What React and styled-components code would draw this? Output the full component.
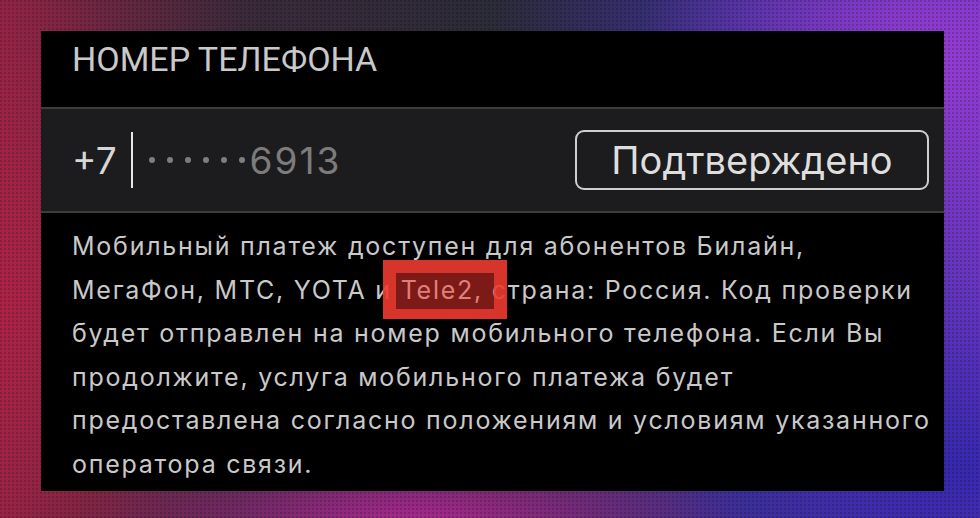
import styled, { createGlobalStyle } from "styled-components";

const GlobalStyle = createGlobalStyle`
  html, body {
    margin: 0;
    padding: 0;
  }
  body {
    font-family: Inter, "Noto Sans", sans-serif;
  }
`;

// Page backdrop

const Root = styled.div`
  position: relative;
  width: 980px;
  height: 518px;
  overflow: hidden;
  box-sizing: border-box;
  padding: 31px 0 0 41px;
  background:
    radial-gradient(circle at 1px 1px, rgba(0, 0, 0, 0.18) 1px, transparent 1.4px) 0 0 / 4px 4px,
    radial-gradient(ellipse 420px 300px at 930px 60px, rgba(150, 60, 210, 0.95), transparent 70%),
    radial-gradient(ellipse 380px 260px at 950px 470px, rgba(50, 40, 170, 0.95), transparent 75%),
    radial-gradient(ellipse 460px 160px at 420px 530px, rgba(190, 40, 160, 0.9), transparent 75%),
    radial-gradient(ellipse 260px 420px at 0px 300px, rgba(170, 35, 70, 1), transparent 80%),
    linear-gradient(90deg, #8e2446 0%, #3a2a3a 25%, #2c2b38 50%, #3b3090 75%, #6a36c0 100%);
`;

const Panel = styled.div`
  width: 903px;
  height: 460px;
  background: #000;
  display: flex;
  flex-direction: column;
`;

const Header = styled.div`
  height: 76px;
  box-sizing: border-box;
  padding: 7px 0 0 31px;
  color: #c9c9c9;
  font-family: Roboto, "Liberation Sans", sans-serif;
  font-size: 34px;
  line-height: 42px;
`;

const Divider = styled.div`
  height: 2px;
  background: #3c3c3e;
`;

// Phone input row

const InputRow = styled.div`
  height: 102px;
  box-sizing: border-box;
  padding: 0 15px 0 31px;
  background: #1c1c1e;
  display: flex;
  align-items: center;
`;

const Prefix = styled.span`
  color: #d6d6d6;
  font-size: 37px;
  line-height: 1;
`;

const Caret = styled.span`
  width: 2px;
  height: 56px;
  background: #e6e6e6;
  margin: 0 10px 0 14px;
`;

const Dots = styled.span`
  display: flex;
  gap: 12px;
  margin-left: 6px;
  margin-right: 5px;
`;

const Dot = styled.span`
  width: 6px;
  height: 6px;
  border-radius: 50%;
  background: #7e7e7e;
`;

const Masked = styled.span`
  color: #7c7c7c;
  font-size: 37px;
  letter-spacing: 2px;
  line-height: 1;
`;

const Confirmed = styled.button`
  margin-left: auto;
  width: 354px;
  height: 60px;
  box-sizing: border-box;
  border: 2px solid #cfcfcf;
  border-radius: 9px;
  background: transparent;
  color: #dedede;
  font-family: Inter, "Noto Sans", sans-serif;
  font-size: 38px;
  line-height: 1;
  padding: 0;
`;

// Description

const Text = styled.p`
  margin: 0;
  padding: 12px 0 0 31px;
  color: #c9c9c9;
  font-size: 25px;
  letter-spacing: 1.75px;
  line-height: 43.5px;
  white-space: nowrap;
`;

const Marked = styled.span`
  position: relative;

  &::after {
    content: "";
    position: absolute;
    left: -18px;
    right: -24px;
    top: -15px;
    bottom: -14px;
    border: 13px solid rgba(236, 58, 48, 0.82);
    border-bottom-width: 10px;
    background: rgba(248, 52, 46, 0.5);
  }
`;

export default function App() {
  return (
    <>
      <GlobalStyle />
      <Root>
        <Panel>
          <Header>НОМЕР ТЕЛЕФОНА</Header>
          <Divider />
          <InputRow>
            <Prefix>+7</Prefix>
            <Caret />
            <Dots>
              {[0, 1, 2, 3, 4, 5].map((i) => (
                <Dot key={i} />
              ))}
            </Dots>
            <Masked>6913</Masked>
            <Confirmed>Подтверждено</Confirmed>
          </InputRow>
          <Divider />
          <Text>
            Мобильный платеж доступен для абонентов Билайн,
            <br />
            МегаФон, МТС, YOTA и <Marked>Tele2,</Marked> страна: Россия. Код проверки
            <br />
            будет отправлен на номер мобильного телефона. Если Вы
            <br />
            продолжите, услуга мобильного платежа будет
            <br />
            предоставлена согласно положениям и условиям указанного
            <br />
            оператора связи.
          </Text>
        </Panel>
      </Root>
    </>
  );
}
